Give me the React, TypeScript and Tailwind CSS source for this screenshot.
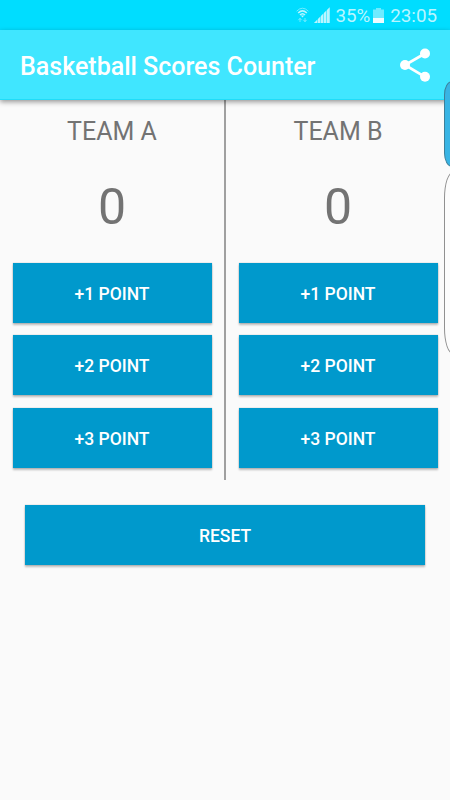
import { useState } from 'react'

const POINTS = [1, 2, 3]

const StatusBar = () => {
	return (
		<div className="h-[30px] shrink-0 bg-[#00ddff] flex items-center justify-end pr-[13px] text-[#b9f5ff]">
			<svg
				className="w-[13px] h-4 mr-[5px]"
				viewBox="0 0 13 16"
				fill="none"
				stroke="currentColor"
			>
				<path
					d="M0.6 4.2Q6.5 -1.8 12.4 4.2"
					strokeWidth="1"
					opacity="0.6"
				/>
				<path
					d="M2.2 6Q6.5 1.8 10.8 6M4 8Q6.5 5.4 9 8"
					strokeWidth="1.5"
				/>
				<path
					d="M4.8 8.6h3.4l-1.7 2z"
					fill="currentColor"
					stroke="none"
				/>
				<path
					d="M4 15v-3.5M2.3 13.2L4 11.3L5.7 13.2M9 11v3.5M7.3 12.8L9 14.7L10.7 12.8"
					strokeWidth="1"
					opacity="0.6"
				/>
			</svg>
			<svg
				className="w-4 h-4 mr-[5px]"
				viewBox="0 0 16 16"
				fill="currentColor"
			>
				<path
					d="M0 16L16 0V16z"
					opacity="0.5"
				/>
				<path d="M0 16L3 13V16zM4 12L6 10V16H4zM7 9L9 7V16H7zM10 6L12 4V16H10zM13 3L15.5 0.5V16H13z" />
			</svg>
			<span className="text-[18.75px] leading-[30px] pt-px">35%</span>
			<svg
				className="w-[11px] h-[15px] ml-[3px] mr-[6px]"
				viewBox="0 0 11 15"
				fill="currentColor"
			>
				<path
					d="M3 0h5v1.5h3V10H0V1.5h3z"
					opacity="0.6"
				/>
				<path
					d="M0 10h11v5H0z"
					fill="#effcff"
				/>
			</svg>
			<span className="text-[18.75px] leading-[30px] pt-px">23:05</span>
		</div>
	)
}

const AppBar = () => {
	return (
		<header className="relative z-10 h-[70px] shrink-0 bg-[#40e6ff] border-b border-[#20dcf8] flex items-center justify-between pl-5 pr-[19px] text-white shadow-[0_2px_5px_rgba(0,0,0,0.4)]">
			<h1 className="text-[25px] font-medium leading-[30px] pt-[5px] whitespace-nowrap">
				Basketball Scores Counter
			</h1>
			<button aria-label="Share">
				<svg
					className="w-8 h-[34px]"
					viewBox="0 0 32 34"
					fill="none"
				>
					<path
						d="M26 5.5L6 17L26 28.8"
						stroke="white"
						strokeWidth="2.7"
					/>
					<g fill="white">
						<circle cx="26" cy="5.5" r="5" />
						<circle cx="6" cy="17" r="5" />
						<circle cx="26" cy="28.8" r="5" />
					</g>
				</svg>
			</button>
		</header>
	)
}

type ScoreButtonProps = {
	label: string
	onClick: () => void
}

const ScoreButton = ({ label, onClick }: ScoreButtonProps) => {
	return (
		<button
			onClick={onClick}
			className="h-[60px] w-full shrink-0 bg-[#0099cc] text-white text-[17.5px] font-medium leading-5 pt-[2px] cursor-pointer shadow-[0_2px_2px_rgba(0,0,0,0.25),0_0_1px_rgba(0,0,0,0.3)]"
		>
			{label}
		</button>
	)
}

type TeamProps = {
	name: string
	score: number
	onAdd: (points: number) => void
}

const Team = ({ name, score, onAdd }: TeamProps) => {
	return (
		<section className="flex-1 flex flex-col items-center px-[12.5px] pt-[17px] text-[#737373]">
			<h2 className="text-[25px] leading-[30px]">{name}</h2>
			<div className="mt-[30px] text-[50px] leading-[60px]">{score}</div>
			<div className="mt-[25.5px] w-full flex flex-col gap-[12.5px]">
				{POINTS.map(points => (
					<ScoreButton
						key={points}
						label={`+${points} POINT`}
						onClick={() => onAdd(points)}
					/>
				))}
			</div>
		</section>
	)
}

const App = () => {
	const [scoreA, setScoreA] = useState(0)
	const [scoreB, setScoreB] = useState(0)

	const handleReset = () => {
		setScoreA(0)
		setScoreB(0)
	}

	return (
		<div className="relative w-[450px] h-[800px] overflow-hidden bg-[#fafafa] flex flex-col font-['Roboto',sans-serif]">
			<StatusBar />
			<AppBar />
			<main>
				<div className="h-[380px] flex">
					<Team
						name="TEAM A"
						score={scoreA}
						onAdd={points => setScoreA(prev => prev + points)}
					/>
					<div className="w-[2px] bg-[#a0a0a0]" />
					<Team
						name="TEAM B"
						score={scoreB}
						onAdd={points => setScoreB(prev => prev + points)}
					/>
				</div>
				<div className="px-[25px] pt-[25px]">
					<ScoreButton
						label="RESET"
						onClick={handleReset}
					/>
				</div>
			</main>

			{/* edge panel handles over the right side of the screen */}
			<div className="absolute z-20 left-[444px] top-[81px] w-5 h-[86px] rounded-[8px/14px] border border-[#3d7f99] bg-[#38b4e4]" />
			<div className="absolute z-20 left-[444px] top-[172px] w-5 h-[182px] rounded-[9px/26px] border border-[#909090] bg-[#fcfcfc]" />
		</div>
	)
}

export default App
